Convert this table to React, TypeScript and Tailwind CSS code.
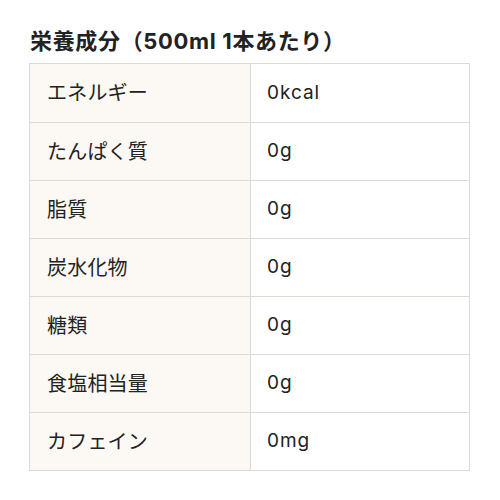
import React from "react";

const rows: [string, string][] = [
  ["エネルギー", "0kcal"],
  ["たんぱく質", "0g"],
  ["脂質", "0g"],
  ["炭水化物", "0g"],
  ["糖類", "0g"],
  ["食塩相当量", "0g"],
  ["カフェイン", "0mg"],
];

export default function App() {
  return (
    <div
      className="w-[500px] h-[500px] bg-white pt-[27px] pl-[29px] text-[#222]"
      style={{ fontFamily: 'Inter, "Noto Sans CJK JP", sans-serif' }}
    >
      <h2 className="text-[22px] leading-[28px] font-bold pl-[1px] mb-[8px] tracking-[0.03em]">
        栄養成分（500ml 1本あたり）
      </h2>
      <div className="w-[441px] border border-[#ddd9d3]">
        {rows.map(([k, v], i) => (
          <div
            key={k}
            className={`flex h-[58px] ${i > 0 ? "border-t border-[#ddd9d3]" : ""}`}
          >
            <div className="w-[221px] bg-[#fcf8f3] border-r border-[#ddd9d3] flex items-center pl-[17px] text-[20px] tracking-[0.01em]">
              {k}
            </div>
            <div className="flex-1 flex items-center pl-[16px] text-[19px] tracking-[0.05em]">
              {v}
            </div>
          </div>
        ))}
      </div>
    </div>
  );
}
